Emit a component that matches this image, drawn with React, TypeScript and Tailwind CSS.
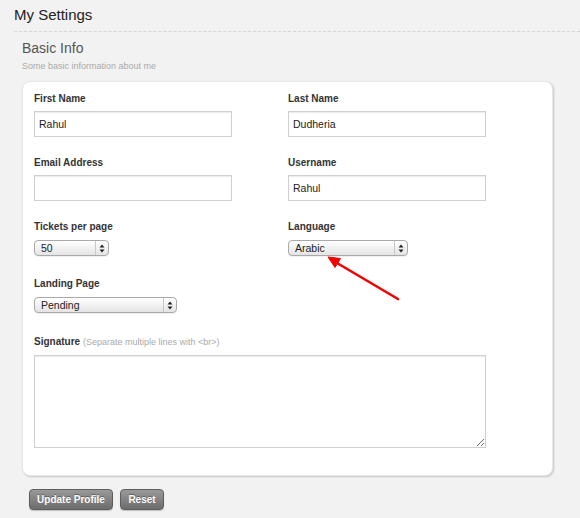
import React from "react";

const font = { fontFamily: '"Liberation Sans", Arial, sans-serif' };

function Label({ children }: { children: React.ReactNode }) {
  return <div className="text-[10px] font-bold leading-[14px] text-[#333]">{children}</div>;
}

function TextInput({ value }: { value?: string }) {
  return (
    <input
      readOnly
      value={value ?? ""}
      className="mt-[5px] block h-[26px] w-[198px] border border-[#cfcfcf] bg-white px-[4px] text-[10.5px] text-[#222] shadow-[inset_0_1px_1px_rgba(0,0,0,0.08)] outline-none"
    />
  );
}

function Arrows() {
  return (
    <svg width="6" height="9" viewBox="0 0 6 9" className="text-[#222]">
      <path d="M3 0.5 L5.5 3.5 L0.5 3.5 Z" fill="currentColor" />
      <path d="M3 8.5 L5.5 5.5 L0.5 5.5 Z" fill="currentColor" />
    </svg>
  );
}

function Select({ value, width }: { value: string; width: string }) {
  return (
    <div
      className={`mt-[6px] flex h-[16px] ${width} items-center rounded-[4px] border border-[#a9a9a9] bg-gradient-to-b from-white to-[#e4e4e4] shadow-[0_1px_0_rgba(0,0,0,0.06)]`}
    >
      <span className="flex-1 pl-[6px] text-[10.5px] leading-none text-[#222]">{value}</span>
      <span className="flex h-full w-[13px] items-center justify-center border-l border-[#c8c8c8]">
        <Arrows />
      </span>
    </div>
  );
}

export default function App() {
  return (
    <div className="min-h-[518px] w-[580px] bg-[#f2f2f2]" style={font}>
      <div className="px-[14px] pt-[5px]">
        <h1 className="text-[15px] leading-[20px] text-[#222]">My Settings</h1>
        <div className="mt-[6px] -mr-[14px] border-t border-dashed border-[#d6d6d6]" />
      </div>

      <div className="pl-[22px] pt-[7px]">
        <h2 className="text-[14px] leading-[18px] text-[#555]">Basic Info</h2>
        <p className="mt-[3px] text-[9px] leading-[12px] text-[#aaa]">Some basic information about me</p>
      </div>

      <div className="relative ml-[22px] mt-[9px] w-[531px] rounded-[8px] border border-[#e6e6e6] bg-white px-[11px] pb-[27px] pt-[10px] shadow-[1px_1px_2px_rgba(0,0,0,0.18)]">
        <div className="grid grid-cols-[254px_254px]">
          <div>
            <Label>First Name</Label>
            <TextInput value="Rahul" />
          </div>
          <div>
            <Label>Last Name</Label>
            <TextInput value="Dudheria" />
          </div>

          <div className="mt-[19px]">
            <Label>Email Address</Label>
            <TextInput />
          </div>
          <div className="mt-[19px]">
            <Label>Username</Label>
            <TextInput value="Rahul" />
          </div>

          <div className="mt-[19px]">
            <Label>Tickets per page</Label>
            <Select value="50" width="w-[75px]" />
          </div>
          <div className="mt-[19px]">
            <Label>Language</Label>
            <Select value="Arabic" width="w-[120px]" />
          </div>
        </div>

        <div className="mt-[21px]">
          <Label>Landing Page</Label>
          <Select value="Pending" width="w-[143px]" />
        </div>

        <div className="mt-[22px]">
          <div className="text-[10px] leading-[14px] text-[#333]">
            <span className="font-bold">Signature</span>{" "}
            <span className="text-[9px] text-[#aaa]">(Separate multiple lines with &lt;br&gt;)</span>
          </div>
          <textarea
            readOnly
            className="mt-[6px] block h-[93px] w-[452px] border border-[#cfcfcf] bg-white shadow-[inset_0_1px_1px_rgba(0,0,0,0.08)] outline-none"
          />
        </div>

        <svg
          className="pointer-events-none absolute left-0 top-0"
          width="531"
          height="396"
          viewBox="0 0 531 396"
        >
          <line x1="375" y1="217" x2="314" y2="181" stroke="#f20000" strokeWidth="2.6" strokeLinecap="round" />
          <path d="M305 175 L317.5 176.5 L312 185.5 Z" fill="#f20000" stroke="#f20000" strokeWidth="1" strokeLinejoin="round" />
        </svg>
      </div>

      <div className="ml-[29px] mt-[13px] flex gap-[7px]">
        <button className="h-[21px] w-[84px] rounded-[4px] border border-[#5e5e5e] bg-gradient-to-b from-[#9a9a9a] to-[#6c6c6c] text-[10px] font-bold text-white shadow-[0_1px_1px_rgba(0,0,0,0.2)] [text-shadow:0_-1px_0_rgba(0,0,0,0.35)]">
          Update Profile
        </button>
        <button className="h-[21px] w-[44px] rounded-[4px] border border-[#5e5e5e] bg-gradient-to-b from-[#9a9a9a] to-[#6c6c6c] text-[10px] font-bold text-white shadow-[0_1px_1px_rgba(0,0,0,0.2)] [text-shadow:0_-1px_0_rgba(0,0,0,0.35)]">
          Reset
        </button>
      </div>
    </div>
  );
}
